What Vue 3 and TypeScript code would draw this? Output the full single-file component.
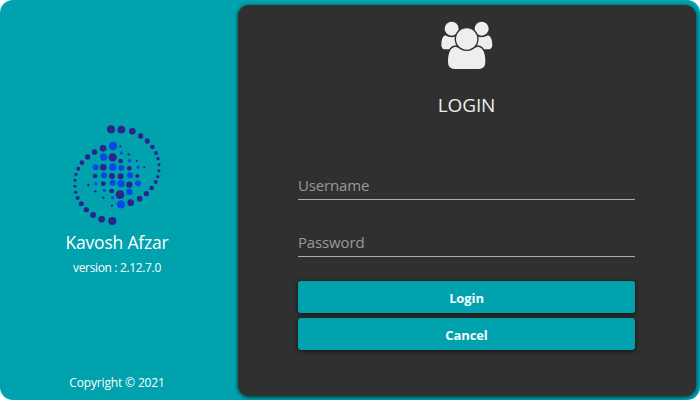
<script setup lang="ts">
import { ref } from 'vue'

type Dot = [number, number, number]

const username = ref('')
const password = ref('')

const navyDots: Dot[] = [
  [134, 33, 12], [165, 34, 11.5], [198, 39, 10], [223, 53, 8], [243, 68, 8], [258, 86, 7],
  [269, 104, 6], [275, 121, 5], [278, 139, 4.5], [278, 157, 4.5], [274, 175, 5], [268, 191, 6],
  [256, 209, 7], [240, 226, 8], [220, 241, 8.5], [193, 253, 10],
  [110, 90, 10], [85, 101, 8.5], [64, 116, 8], [47, 133, 7], [36, 151, 6], [29, 168, 5],
  [26, 186, 4.5], [26, 204, 4.5], [28, 222, 5], [34, 239, 6], [45, 256, 7.5], [60, 274, 8],
  [80, 290, 9], [106, 303, 10], [138, 308, 12],
  [162, 84, 3], [139, 117, 12.5], [187, 108, 3.5], [163, 128, 7], [211, 128, 3],
  [111, 147, 10], [189, 150, 7], [234, 147, 3], [86, 173, 7], [137, 173, 9], [163, 174, 9],
  [213, 173, 6], [66, 200, 3.5], [111, 196, 7], [189, 199, 9.5], [87, 219, 3.5],
  [136, 218, 7], [161, 229, 13], [111, 238, 3.5], [137, 262, 3.5],
]
const blueDots: Dot[] = [
  [140, 83, 12.5], [112, 116, 11], [165, 104, 5], [190, 127, 5], [88, 147, 9], [140, 146, 11.5],
  [165, 149, 9], [215, 146, 5], [113, 171, 9], [191, 171, 9], [88, 196, 5], [139, 193, 9],
  [164, 196, 11], [215, 195, 9], [114, 216, 5], [189, 221, 10], [139, 238, 5], [164, 258, 12.5],
]
</script>

<template>
  <main class="window">
    <aside class="brand">
      <svg class="logo" viewBox="0 0 300 336" aria-hidden="true">
        <circle v-for="(d, i) in navyDots" :key="'n' + i" :cx="d[0] + 1" :cy="d[1] + 1" :r="d[2]" fill="#2d2388" />
        <circle v-for="(d, i) in blueDots" :key="'b' + i" :cx="d[0] + 1" :cy="d[1] + 1" :r="d[2]" fill="#0549e8" />
      </svg>
      <h1 class="name">Kavosh Afzar</h1>
      <p class="version">version : 2.12.7.0</p>
      <p class="copyright">Copyright © 2021</p>
    </aside>
    <form class="panel" @submit.prevent>
      <svg class="users" viewBox="0 0 240 210" aria-hidden="true">
        <g fill="#eee">
          <circle cx="65" cy="56" r="21" />
          <circle cx="155" cy="56" r="21" />
          <path d="M46 76Q65 87 79 77L80 118H44Q34 116 34 104Q34 80 46 76Z" />
          <path d="M174 76Q155 87 141 77L140 118H176Q187 116 187 104Q186 80 174 76Z" />
        </g>
        <g fill="#eee" stroke="#303030" stroke-width="8" paint-order="stroke">
          <path d="M77 110Q110 128 143 110Q166 112 166 156Q166 177 146 177H74Q54 177 54 156Q54 112 77 110Z" />
          <circle cx="110" cy="87" r="32" />
        </g>
      </svg>
      <h2 class="title">LOGIN</h2>
      <input v-model="username" class="field" type="text" placeholder="Username" aria-label="Username">
      <input v-model="password" class="field" type="password" placeholder="Password" aria-label="Password">
      <button class="button login" type="submit"><span>Login</span></button>
      <button class="button cancel" type="button"><span>Cancel</span></button>
    </form>
  </main>
</template>

<style>
body {
  margin: 0;
  background: #fff;
}
</style>

<style scoped>
* {
  box-sizing: border-box;
}
.window {
  display: flex;
  width: 700px;
  height: 400px;
  padding: 5px 4px 4px 0;
  overflow: hidden;
  border-radius: 13px;
  background: #00a2ae;
  color: #fff;
  font-family: "Open Sans", "Noto Sans", sans-serif;
}
.brand {
  display: flex;
  flex-direction: column;
  align-items: center;
  width: 238px;
  padding: 113px 4px 0 0;
}
.logo {
  width: 100px;
  height: 112px;
  margin-right: 2px;
  flex: none;
}
.name {
  margin: -1px 0 0;
  font-size: 17.5px;
  font-weight: 400;
  line-height: 26px;
  letter-spacing: -0.2px;
  white-space: nowrap;
}
.version,
.copyright {
  margin: 0;
  font-size: 12px;
  line-height: 18px;
  letter-spacing: -0.35px;
}
.version {
  margin-top: 4px;
}
.copyright {
  margin-top: auto;
  margin-bottom: 4px;
  letter-spacing: -0.15px;
}
.panel {
  display: flex;
  flex-direction: column;
  align-items: center;
  width: 458px;
  height: 391px;
  padding: 5px 1px 0 0;
  border-radius: 11px;
  background: #303030;
  box-shadow: 0 1px 4px rgba(0, 0, 0, 0.75);
}
.users {
  width: 80px;
  height: 70px;
  margin-left: 7px;
  flex: none;
}
.title {
  margin: 11px 0 0;
  height: 28px;
  color: #eee;
  font-size: 19px;
  font-weight: 400;
  line-height: 28px;
  letter-spacing: -0.1px;
}
.field {
  width: 337px;
  height: 30px;
  margin: 51px 0 0;
  padding: 1px 0 0;
  border: 0;
  border-bottom: 1px solid #aaa;
  border-radius: 0;
  outline: 0;
  background: transparent;
  color: #eee;
  font: 400 15px "Open Sans", "Noto Sans", sans-serif;
  letter-spacing: -0.15px;
}
.field + .field {
  margin-top: 27px;
}
.field::placeholder {
  color: #999;
  opacity: 1;
}
.button {
  width: 337px;
  height: 32px;
  margin: 24px 0 0;
  padding: 2px 0 0;
  border: 0;
  border-radius: 3px;
  background: #00a2ae;
  box-shadow: 0 1px 4px rgba(0, 0, 0, 0.7);
  color: #f5ffff;
  font: 700 13px/30px "Open Sans", "Noto Sans", sans-serif;
  letter-spacing: -0.1px;
}
.button + .button {
  margin-top: 5px;
}
</style>
